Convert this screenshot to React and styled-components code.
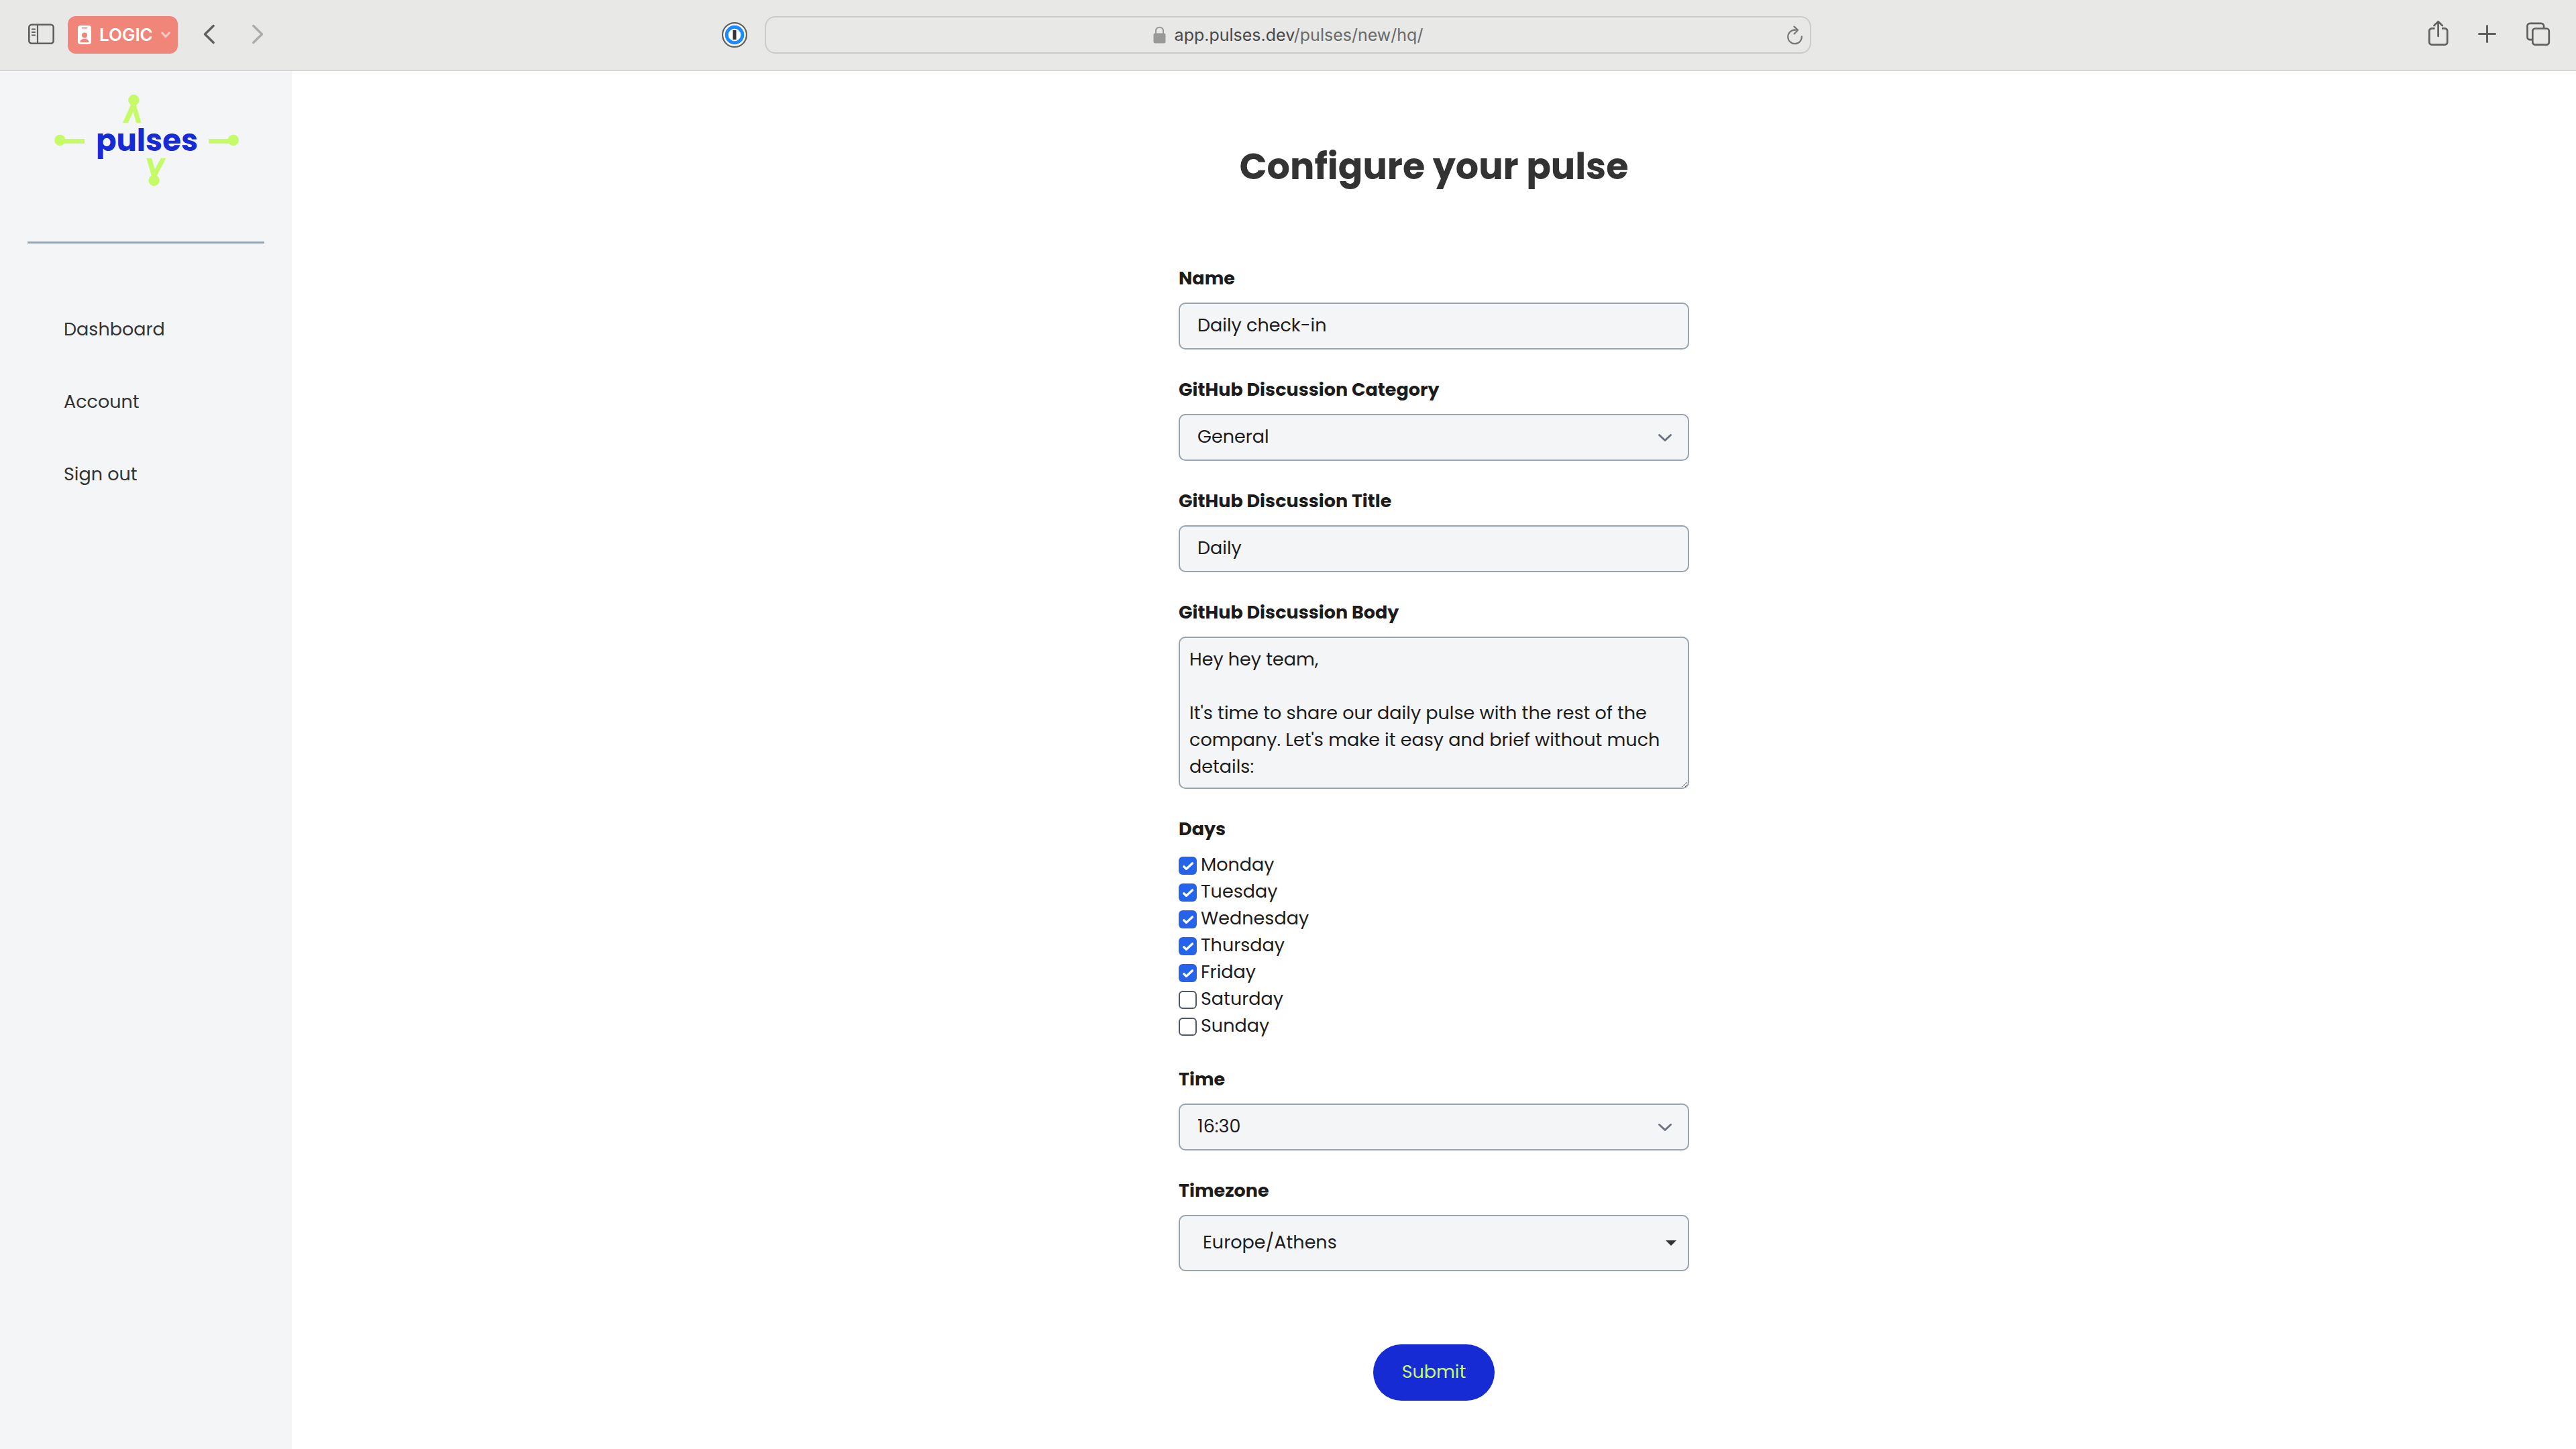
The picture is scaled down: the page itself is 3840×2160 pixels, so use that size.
import React from "react";
import styled, { createGlobalStyle } from "styled-components";

const GlobalStyle = createGlobalStyle`
  *, *::before, *::after { box-sizing: border-box; }
  body {
    margin: 0;
    background: #ffffff;
    color: #1c1c1c;
    font-family: Poppins, Inter, "Open Sans", sans-serif;
    font-size: 27px;
    line-height: 40px;
  }
  button, input, select, textarea { font: inherit; color: inherit; }
`;

const Page = styled.div`
  display: flex;
  flex-direction: column;
  min-height: 100vh;
`;

/* Browser toolbar */

const Toolbar = styled.header`
  display: grid;
  grid-template-columns: 1fr minmax(0, 1560px) 1fr;
  align-items: center;
  height: 106px;
  background: #e8e8e6;
  border-bottom: 2px solid #d6d6d5;
  color: #5f5f5e;
  font-family: Inter, "Open Sans", sans-serif;
`;

const ToolbarStart = styled.div`
  display: flex;
  align-items: center;
  gap: 17px;
  padding: 0 23px 0 40px;
`;

const ToolbarEnd = styled.div`
  display: flex;
  align-items: center;
  justify-content: flex-end;
  gap: 30px;
  padding-right: 34px;
`;

const HistoryButtons = styled.div`
  display: flex;
  gap: 28px;
  margin-left: 8px;
`;

const IconButton = styled.button`
  display: block;
  width: 44px;
  height: 44px;
  padding: 0;
  border: 0;
  background: none;
  color: ${(p) => (p.$faded ? "#ababaa" : "inherit")};
  margin-left: ${(p) => (p.$pushed ? "auto" : "0")};
  svg { display: block; }
`;

const ProfileButton = styled.button`
  display: flex;
  align-items: center;
  gap: 12px;
  height: 56px;
  padding: 0 11px 0 15px;
  border: 0;
  border-radius: 12px;
  background: #f08679;
  color: #ffffff;
  font-size: 26px;
  font-weight: 600;
`;

const AddressBar = styled.div`
  display: grid;
  grid-template-columns: 38px 1fr 38px;
  align-items: center;
  height: 56px;
  border: 2px solid #cbcbc9;
  border-radius: 16px;
`;

const Address = styled.div`
  grid-column: 2;
  display: flex;
  align-items: center;
  justify-content: center;
  gap: 13px;
  font-size: 25px;
  color: #6a6a69;
`;

const Domain = styled.span`
  color: #484847;
`;

const ReloadButton = styled.button`
  padding: 0;
  border: 0;
  background: none;
  color: #777776;
  svg { display: block; }
`;

function Icon({ size = 44, width, height, weight = 3, children }) {
  const w = width || size;
  const h = height || size;
  return (
    <svg
      width={w}
      height={h}
      viewBox={`0 0 ${w} ${h}`}
      fill="none"
      stroke="currentColor"
      strokeWidth={weight}
      strokeLinecap="round"
      strokeLinejoin="round"
      aria-hidden="true"
    >
      {children}
    </svg>
  );
}

/* Application */

const Body = styled.div`
  display: flex;
  flex: 1;
`;

const Sidebar = styled.aside`
  flex: none;
  width: 435px;
  padding: 33px 41px 0;
  background: #f3f5f7;
`;

const LogoLink = styled.a`
  display: flex;
  justify-content: center;
  svg { display: block; }
`;

const Divider = styled.hr`
  height: 3px;
  margin: 81px 0 97px;
  border: 0;
  background: #99a3ae;
`;

const Nav = styled.nav`
  display: flex;
  flex-direction: column;
  gap: 46px;
`;

const NavLink = styled.a`
  padding: 11px 54px;
  color: #333333;
  text-decoration: none;
`;

const Main = styled.main`
  flex: 1;
  display: flex;
  flex-direction: column;
  align-items: center;
  padding: 102px 40px 70px;
`;

const Title = styled.h1`
  margin: 0 0 107px;
  color: #333333;
  font-size: 54px;
  font-weight: 700;
  line-height: 80px;
`;

const Form = styled.form`
  display: flex;
  flex-direction: column;
  gap: 40px;
  width: 100%;
  max-width: 761px;
`;

const Field = styled.div`
  display: flex;
  flex-direction: column;
  gap: 16px;
`;

const Label = styled.label`
  font-weight: 700;
`;

const control = `
  display: block;
  width: 100%;
  border: 2px solid #99a3ae;
  border-radius: 10px;
  background: #f3f5f7;
  outline: none;
`;

const TextInput = styled.input`
  ${control}
  height: 70px;
  padding: 0 26px 2px;
`;

const TextArea = styled.textarea`
  ${control}
  height: 227px;
  padding: 12px 14px;
  resize: both;
  overflow: hidden;
`;

const SelectBox = styled.div`
  position: relative;
`;

const Select = styled.select`
  ${control}
  appearance: none;
  height: ${(p) => (p.$tall ? 84 : 70)}px;
  padding: 0 72px 2px ${(p) => (p.$tall ? 34 : 26)}px;
`;

const SelectMark = styled.span`
  position: absolute;
  top: 0;
  bottom: 0;
  right: ${(p) => p.$inset}px;
  display: flex;
  align-items: center;
  color: ${(p) => p.$color};
  pointer-events: none;
`;

const DayGroup = styled.fieldset`
  margin: 0;
  padding: 0;
  border: 0;
  min-width: 0;
`;

const DayLegend = styled.legend`
  padding: 0;
  margin-bottom: 13px;
  font-weight: 700;
`;

const Day = styled.label`
  display: flex;
  align-items: center;
  gap: 6px;
`;

const checkMark = encodeURIComponent(
  '<svg xmlns="http://www.w3.org/2000/svg" viewBox="0 0 27 27" fill="none" stroke="white" stroke-width="3.4" stroke-linecap="round" stroke-linejoin="round"><path d="M7.8 14.8 11.4 18.2 20.4 9.9"/></svg>'
);

const Checkbox = styled.input`
  appearance: none;
  flex: none;
  width: 27px;
  height: 27px;
  margin: 2px 0 0;
  border: 2px solid #4f5966;
  border-radius: 6px;
  background: #ffffff;
  &:checked {
    border: 0;
    background: #2563eb url("data:image/svg+xml,${checkMark}") center / 100% 100%;
  }
`;

const SubmitButton = styled.button`
  align-self: center;
  height: 84px;
  margin-top: 69px;
  padding: 0 43px 2px;
  border: 0;
  border-radius: 42px;
  background: #172bd4;
  color: #c5fa69;
`;

const days = [
  ["Monday", true],
  ["Tuesday", true],
  ["Wednesday", true],
  ["Thursday", true],
  ["Friday", true],
  ["Saturday", false],
  ["Sunday", false],
];

const discussionBody = `Hey hey team,

It's time to share our daily pulse with the rest of the company. Let's make it easy and brief without much details:`;

function Logo() {
  return (
    <svg width="279" height="140" viewBox="78 139 279 140" role="img" aria-label="pulses">
      <g fill="#c5fa69">
        <circle cx="89.4" cy="209" r="8.2" />
        <path d="M89 207H126V214H89Z" />
        <circle cx="347.8" cy="209" r="8.2" />
        <path d="M311.3 207H348V214H311.3Z" />
        <circle cx="199.3" cy="149.2" r="8.2" />
        <path d="M183 183 195.5 155H202.5L210.4 183H203L198.6 166.3 190.8 183Z" />
        <circle cx="229.7" cy="269" r="8.2" />
        <path d="M218.3 235.7H226L230.8 252.3 239.8 235.7H247.4L233 263.5H226.3Z" />
      </g>
      <text
        x="219"
        y="225"
        textAnchor="middle"
        fill="#172bd4"
        fontFamily="Poppins, Inter, sans-serif"
        fontSize="45"
        fontWeight="700"
      >
        pulses
      </text>
    </svg>
  );
}

function Chrome() {
  return (
    <Toolbar>
      <ToolbarStart>
        <IconButton type="button" aria-label="Show sidebar">
          <Icon weight={2.6}>
            <rect x="3.3" y="6.8" width="36.4" height="28" rx="4" />
            <path d="M16 7V34.5" strokeWidth="2.2" />
            <path d="M7.8 13.5H12.2M7.8 18H12.2M7.8 22.5H12.2" strokeWidth="1.8" />
          </Icon>
        </IconButton>
        <ProfileButton type="button">
          <svg width="20" height="28" viewBox="0 0 20 28" aria-hidden="true">
            <rect width="20" height="28" rx="4" fill="#fff" />
            <g fill="#f08679">
              <rect x="5.8" y="2.8" width="8.5" height="1.7" rx=".8" />
              <circle cx="10" cy="14.6" r="4" />
              <path d="M3.5 25C3.5 22 6 19.8 10 19.8S16.5 22 16.5 25Z" />
            </g>
          </svg>
          LOGIC
          <Icon width={14} height={10}>
            <path d="M1.7 2 7 7.6 12.3 2" opacity=".55" />
          </Icon>
        </ProfileButton>
        <HistoryButtons>
          <IconButton type="button" aria-label="Back">
            <Icon weight={3.4}>
              <path d="M28.2 8.5 15.5 21 28.2 33.5" />
            </Icon>
          </IconButton>
          <IconButton type="button" aria-label="Forward" $faded>
            <Icon weight={3.4}>
              <path d="M15.8 8.5 28.5 21 15.8 33.5" />
            </Icon>
          </IconButton>
        </HistoryButtons>
        <IconButton type="button" aria-label="1Password" $pushed>
          <svg width="44" height="44" viewBox="0 0 44 44" aria-hidden="true">
            <circle cx="22" cy="22" r="17.9" fill="#fff" stroke="#5f5f5e" strokeWidth="2.2" />
            <circle cx="22" cy="22" r="11.8" fill="#fff" stroke="#1a8cff" strokeWidth="5" />
            <rect x="19.5" y="15" width="5" height="14" fill="#333" />
          </svg>
        </IconButton>
      </ToolbarStart>
      <AddressBar>
        <Address>
          <svg width="19" height="26" viewBox="0 0 19 26" aria-hidden="true">
            <rect x=".5" y="10.5" width="18" height="15" rx="2.5" fill="#999997" />
            <path d="M4 11V7.5C4 3.8 6 1.8 9.5 1.8S15 3.8 15 7.5V11" fill="none" stroke="#999997" strokeWidth="2" />
          </svg>
          <span>
            <Domain>app.pulses.dev</Domain>/pulses/new/hq/
          </span>
        </Address>
        <ReloadButton type="button" aria-label="Reload">
          <Icon width={32} height={32} weight={2.2}>
            <path d="M15.5 8.6A10.3 10.3 0 1 0 25.8 18.4" />
            <path d="M14.5 3.6 20 8.9 14.5 14.5" />
            <path d="M15 8.7H19.5" />
          </Icon>
        </ReloadButton>
      </AddressBar>
      <ToolbarEnd>
        <IconButton type="button" aria-label="Share">
          <Icon weight={2.7}>
            <path d="M15.5 12.3H11A3.8 3.8 0 0 0 7.3 16V33A3.8 3.8 0 0 0 11 36.7H30.5A3.8 3.8 0 0 0 34.2 33V16A3.8 3.8 0 0 0 30.5 12.3H26" strokeLinecap="butt" />
            <path d="M20.6 24V2.5M14.5 8 20.6 2.2 26.7 8" />
          </Icon>
        </IconButton>
        <IconButton type="button" aria-label="New tab">
          <Icon weight={3}>
            <path d="M19.5 8.5V32.5M7.5 20.5H31.5" />
          </Icon>
        </IconButton>
        <IconButton type="button" aria-label="Tab overview">
          <Icon weight={2.7}>
            <path d="M13 29.2H9.3A3.8 3.8 0 0 1 5.5 25.4V8.6A3.8 3.8 0 0 1 9.3 4.8H26.2A3.8 3.8 0 0 1 30 8.6V12" strokeLinecap="butt" />
            <rect x="13.3" y="12.5" width="24.5" height="24.2" rx="3.8" />
          </Icon>
        </IconButton>
      </ToolbarEnd>
    </Toolbar>
  );
}

function Chevron() {
  return (
    <SelectMark $inset={25} $color="#6b7280">
      <Icon width={22} height={14}>
        <path d="M2.5 3.5 11 11.5 19.5 3.5" />
      </Icon>
    </SelectMark>
  );
}

export default function App() {
  return (
    <Page>
      <GlobalStyle />
      <Chrome />
      <Body>
        <Sidebar>
          <LogoLink href="#">
            <Logo />
          </LogoLink>
          <Divider />
          <Nav>
            <NavLink href="#dashboard">Dashboard</NavLink>
            <NavLink href="#account">Account</NavLink>
            <NavLink href="#sign-out">Sign out</NavLink>
          </Nav>
        </Sidebar>
        <Main>
          <Title>Configure your pulse</Title>
          <Form onSubmit={(e) => e.preventDefault()}>
            <Field>
              <Label htmlFor="name">Name</Label>
              <TextInput id="name" defaultValue="Daily check-in" />
            </Field>
            <Field>
              <Label htmlFor="category">GitHub Discussion Category</Label>
              <SelectBox>
                <Select id="category">
                  <option>General</option>
                </Select>
                <Chevron />
              </SelectBox>
            </Field>
            <Field>
              <Label htmlFor="title">GitHub Discussion Title</Label>
              <TextInput id="title" defaultValue="Daily" />
            </Field>
            <Field>
              <Label htmlFor="body">GitHub Discussion Body</Label>
              <TextArea id="body" defaultValue={discussionBody} />
            </Field>
            <DayGroup>
              <DayLegend>Days</DayLegend>
              {days.map(([day, checked]) => (
                <Day key={day}>
                  <Checkbox type="checkbox" defaultChecked={checked} />
                  {day}
                </Day>
              ))}
            </DayGroup>
            <Field>
              <Label htmlFor="time">Time</Label>
              <SelectBox>
                <Select id="time">
                  <option>16:30</option>
                </Select>
                <Chevron />
              </SelectBox>
            </Field>
            <Field>
              <Label htmlFor="timezone">Timezone</Label>
              <SelectBox>
                <Select id="timezone" $tall>
                  <option>Europe/Athens</option>
                </Select>
                <SelectMark $inset={19} $color="#333333">
                  <svg width="16" height="8" viewBox="0 0 16 8" aria-hidden="true">
                    <path d="M0 0H16L8 8Z" fill="currentColor" />
                  </svg>
                </SelectMark>
              </SelectBox>
            </Field>
            <SubmitButton type="submit">Submit</SubmitButton>
          </Form>
        </Main>
      </Body>
    </Page>
  );
}
